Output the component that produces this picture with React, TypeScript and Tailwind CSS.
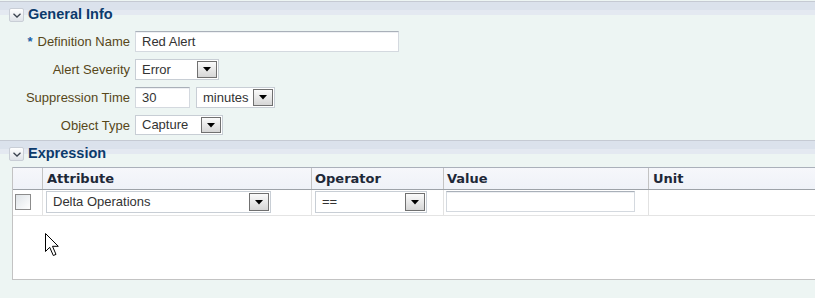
import React from "react";

const Chevron = () => (
  <div className="w-[15px] h-[14px] rounded-[2px] border border-[#c9ced6] bg-linear-to-b from-white to-[#dfe3e9] flex items-center justify-center">
    <svg width="8" height="5" viewBox="0 0 8 5">
      <polyline points="0.5,0.8 4,4 7.5,0.8" fill="none" stroke="#3c4450" strokeWidth="1.3" />
    </svg>
  </div>
);

const SectionHeader = ({ title }: { title: string }) => (
  <div className="h-[27px] border-t border-[#c5cad3] bg-[linear-gradient(to_bottom,#dbe2ec_0px,#dbe2ec_8px,#e4e9f1_8px,#e4e9f1_13px,#edf5f3_13px)] flex items-center pl-[9px] gap-[4px]">
    <Chevron />
    <span className="font-['Liberation_Sans',Arial,sans-serif] font-bold text-[14.5px] text-[#0c3b6c]">{title}</span>
  </div>
);

const ArrowButton = () => (
  <div className="w-[20px] h-full border border-[#707070] bg-linear-to-b from-[#fbfbfb] to-[#d6d6d6] flex items-center justify-center">
    <svg width="8" height="5" viewBox="0 0 8 5">
      <polygon points="0,0 8,0 4,4.5" fill="#000" />
    </svg>
  </div>
);

const Select = ({ value, width, height = 21 }: { value: string; width: number; height?: number }) => (
  <div
    className="flex items-stretch border border-[#c8ced5] bg-white p-px"
    style={{ width, height }}
  >
    <div className="flex-1 flex items-center pl-[5px] text-[13px] text-[#333]">{value}</div>
    <ArrowButton />
  </div>
);

const TextInput = ({ value, width, height = 21 }: { value: string; width: number; height?: number }) => (
  <div
    className="flex items-center border border-[#d4d9df] border-t-[#a9b0b9] bg-white pl-[6px] text-[13px] text-[#333] shadow-[inset_0_1px_0_#eef0f3]"
    style={{ width, height }}
  >
    {value}
  </div>
);

const Label = ({ text, required }: { text: string; required?: boolean }) => (
  <div className="flex items-center justify-end text-[13px] text-[#574719] whitespace-nowrap">
    {required && <span className="text-[#1b5fa6] font-bold mr-[5px]">*</span>}
    {text}
  </div>
);

export default function App() {
  return (
    <div className="w-[815px] h-[298px] overflow-hidden bg-[#edf5f3] font-['Liberation_Sans',Arial,sans-serif]">
      <div className="h-px" />
      <SectionHeader title="General Info" />

      <div className="pt-[3px] grid grid-cols-[130px_auto] gap-x-[5px] gap-y-[7px] auto-rows-[21px]">
        <Label text="Definition Name" required />
        <TextInput value="Red Alert" width={264} />

        <Label text="Alert Severity" />
        <Select value="Error" width={84} />

        <Label text="Suppression Time" />
        <div className="flex gap-[6px]">
          <TextInput value="30" width={55} />
          <Select value="minutes" width={79} />
        </div>

        <Label text="Object Type" />
        <Select value="Capture" width={88} height={20} />
      </div>

      <div className="h-[4px]" />
      <SectionHeader title="Expression" />

      <div className="ml-[12px] w-[830px] border-l border-b border-[#c3c3c3] bg-white">
        {/* header row */}
        <div className="flex h-[23px] border-t border-[#aab0ba] border-b border-b-[#9da2a8] bg-linear-to-b from-[#f6f7fb] to-[#eff2f8] font-['DejaVu_Sans',sans-serif] font-bold text-[13px] text-[#1e2838]">
          <div className="w-[29px]" />
          <div className="w-[269px] border-l border-[#c3c3c3] pl-[4px] flex items-center">Attribute</div>
          <div className="w-[132px] border-l border-[#c3c3c3] pl-[3px] flex items-center">Operator</div>
          <div className="w-[205px] border-l border-[#c3c3c3] pl-[3px] flex items-center">Value</div>
          <div className="flex-1 border-l border-[#c3c3c3] pl-[4px] flex items-center">Unit</div>
        </div>

        {/* data row */}
        <div className="flex h-[26px] border-b border-[#e4e4e4]">
          <div className="w-[29px] pl-[2px] pt-[4px]">
            <div className="w-[16px] h-[16px] border border-[#8c8c8c] bg-linear-to-br from-[#dfe4e8] to-white" />
          </div>
          <div className="w-[269px] border-l border-[#e2e2e2] pl-[3px] pt-[1px]">
            <Select value="Delta Operations" width={225} height={22} />
          </div>
          <div className="w-[132px] border-l border-[#e2e2e2] pl-[3px] pt-[1px]">
            <Select value="==" width={112} height={22} />
          </div>
          <div className="w-[205px] border-l border-[#e2e2e2] pl-[2px] pt-[1px]">
            <TextInput value="" width={189} height={21} />
          </div>
          <div className="flex-1 border-l border-[#e2e2e2]" />
        </div>

        {/* empty area */}
        <div className="relative h-[63px]">
          <svg className="absolute left-[32px] top-[17px]" width="18" height="26" viewBox="0 0 18 26">
            <path
              d="M0.5 0.5 L0.5 18.5 L4.7 14.3 L8.3 22.5 L11 21.4 L7.5 13.3 L13.3 13.3 Z"
              fill="#fff"
              stroke="#000"
              strokeWidth="1"
            />
          </svg>
        </div>
      </div>
    </div>
  );
}
